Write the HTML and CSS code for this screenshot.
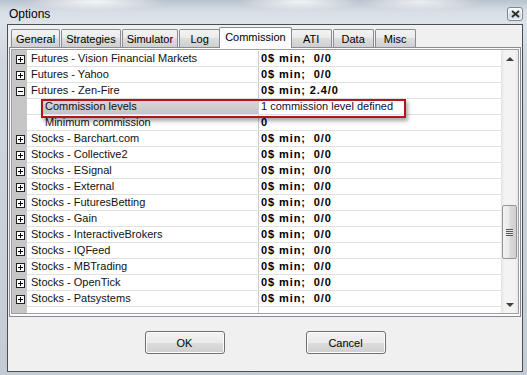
FILE: index.html
```html
<!DOCTYPE html>
<html lang="en">
<head>
    <meta charset="UTF-8">
    <title>Options</title>
    <link rel="stylesheet" href="styles.css">
</head>
<body>
    <div class="window">
        <div class="titlebar">
            <span class="title">Options</span>
            <button class="close-btn" title="Close">
                <svg width="9" height="8" viewBox="0 0 9 8">
                    <path d="M1 1 L8 7 M8 1 L1 7" stroke="#2b2b2b" stroke-width="1.8" fill="none"/>
                </svg>
            </button>
        </div>

        <div class="client">
            <div class="tab-links">
                <div class="tab">General</div>
                <div class="tab">Strategies</div>
                <div class="tab">Simulator</div>
                <div class="tab">Log</div>
                <div class="tab active">Commission</div>
                <div class="tab">ATI</div>
                <div class="tab">Data</div>
                <div class="tab">Misc</div>
            </div>

            <div class="tab-page">
                <div class="grid">
                    <div class="rows">
                        <div class="row"><span class="gutter"><span class="expander plus"></span></span><span class="name">Futures - Vision Financial Markets</span><span class="value bold">0$ min;  0/0</span></div>
                        <div class="row"><span class="gutter"><span class="expander plus"></span></span><span class="name">Futures - Yahoo</span><span class="value bold">0$ min;  0/0</span></div>
                        <div class="row"><span class="gutter"><span class="expander"></span></span><span class="name">Futures - Zen-Fire</span><span class="value bold">0$ min; 2.4/0</span></div>
                        <div class="row child selected"><span class="gutter"></span><span class="name"><span class="label">Commission levels</span></span><span class="value">1 commission level defined</span></div>
                        <div class="row child"><span class="gutter"></span><span class="name"><span class="label">Minimum commission</span></span><span class="value bold">0</span></div>
                        <div class="row"><span class="gutter"><span class="expander plus"></span></span><span class="name">Stocks - Barchart.com</span><span class="value bold">0$ min;  0/0</span></div>
                        <div class="row"><span class="gutter"><span class="expander plus"></span></span><span class="name">Stocks - Collective2</span><span class="value bold">0$ min;  0/0</span></div>
                        <div class="row"><span class="gutter"><span class="expander plus"></span></span><span class="name">Stocks - ESignal</span><span class="value bold">0$ min;  0/0</span></div>
                        <div class="row"><span class="gutter"><span class="expander plus"></span></span><span class="name">Stocks - External</span><span class="value bold">0$ min;  0/0</span></div>
                        <div class="row"><span class="gutter"><span class="expander plus"></span></span><span class="name">Stocks - FuturesBetting</span><span class="value bold">0$ min;  0/0</span></div>
                        <div class="row"><span class="gutter"><span class="expander plus"></span></span><span class="name">Stocks - Gain</span><span class="value bold">0$ min;  0/0</span></div>
                        <div class="row"><span class="gutter"><span class="expander plus"></span></span><span class="name">Stocks - InteractiveBrokers</span><span class="value bold">0$ min;  0/0</span></div>
                        <div class="row"><span class="gutter"><span class="expander plus"></span></span><span class="name">Stocks - IQFeed</span><span class="value bold">0$ min;  0/0</span></div>
                        <div class="row"><span class="gutter"><span class="expander plus"></span></span><span class="name">Stocks - MBTrading</span><span class="value bold">0$ min;  0/0</span></div>
                        <div class="row"><span class="gutter"><span class="expander plus"></span></span><span class="name">Stocks - OpenTick</span><span class="value bold">0$ min;  0/0</span></div>
                        <div class="row"><span class="gutter"><span class="expander plus"></span></span><span class="name">Stocks - Patsystems</span><span class="value bold">0$ min;  0/0</span></div>
                        <div class="row"><span class="gutter"></span><span class="name"></span><span class="value"></span></div>

                        <!-- red annotation box over the selected row -->
                        <div class="annotation"></div>
                    </div>

                    <div class="scrollbar">
                        <div class="scroll-btn"><span class="arrow up"></span></div>
                        <div class="scroll-track">
                            <div class="scroll-thumb"><span class="grip"></span></div>
                        </div>
                        <div class="scroll-btn"><span class="arrow down"></span></div>
                    </div>
                </div>
            </div>

            <div class="dialog-buttons">
                <button class="dlg-btn">OK</button>
                <button class="dlg-btn">Cancel</button>
            </div>
        </div>
    </div>
</body>
</html>
```

FILE: styles.css
```css
/* Page and window frame */
body {
    margin: 0;
    font-family: "Liberation Sans", Arial, sans-serif;
    font-size: 11px;
    color: #000;
    background: #c8d1db;
}

.window {
    width: 527px;
    height: 375px;
    box-sizing: border-box;
    display: flex;
    flex-direction: column;
    padding: 0 4px 3px 7px;
    overflow: hidden;
    background:
        radial-gradient(ellipse 70px 9px at 95px 2px, rgba(255,255,255,0.85), rgba(255,255,255,0) 100%),
        radial-gradient(ellipse 60px 9px at 300px 2px, rgba(255,255,255,0.8), rgba(255,255,255,0) 100%),
        radial-gradient(ellipse 60px 9px at 420px 2px, rgba(255,255,255,0.7), rgba(255,255,255,0) 100%),
        linear-gradient(#b9c3ce 0, #d9dfe6 12px, #dde3ea 24px, #cfd6de 60px, #c3ccd5 100%);
}

/* Title bar */
.titlebar {
    height: 24px;
    display: flex;
    align-items: flex-start;
    margin-left: -7px;
    margin-right: -4px;
    padding-left: 9px;
    padding-right: 4px;
}
.title {
    font-size: 12px;
    line-height: 12px;
    margin-top: 8px;
    color: #000;
}
.close-btn {
    margin-left: auto;
    margin-top: 7px;
    width: 16px;
    height: 14px;
    padding: 0;
    display: flex;
    align-items: center;
    justify-content: center;
    border: 1px solid #7d8792;
    border-radius: 3px;
    background: linear-gradient(#f7f9fb, #dfe4ea 50%, #cdd4dc 51%, #e3e8ee);
    box-shadow: inset 0 0 0 1px rgba(255,255,255,0.6);
}

/* Client area of the dialog */
.client {
    flex: 1;
    display: flex;
    flex-direction: column;
    border: 1px solid #4a4f55;
    background: #f0f0f0;
}

/* Tabs */
.tab-links {
    height: 22px;
    display: flex;
    align-items: flex-end;
    padding-left: 3px;
}
.tab {
    height: 18px;
    min-width: 41px;
    box-sizing: border-box;
    padding: 0 4px;
    margin-right: 1px;
    display: flex;
    align-items: center;
    justify-content: center;
    border: 1px solid #898c95;
    border-bottom: none;
    border-radius: 2px 2px 0 0;
    background: linear-gradient(#f3f3f3, #ebebeb 45%, #dddddd 50%, #cfcfcf);
    font-size: 11px;
}
.tab.active {
    height: 21px;
    margin: 0 -1px -1px -2px;
    padding: 0 5px;
    position: relative;
    z-index: 1;
    background: #fcfcfe;
    padding-bottom: 2px;
}
.tab.active + .tab {
    margin-left: 0;
}

/* Tab page with the property grid */
.tab-page {
    height: 270px;
    box-sizing: border-box;
    margin: 0 1px;
    padding: 1px;
    border: 1px solid #898c95;
    background: #fcfcfc;
}
.grid {
    height: 265px;
    box-sizing: border-box;
    display: flex;
    border: 1px solid #a0a0a0;
    background: #fff;
    overflow: hidden;
}
.rows {
    flex: 1;
    position: relative;
    padding-top: 1px;
    overflow: hidden;
    background: linear-gradient(to right, #c6c6c6 15px, #fff 15px);
}
.row {
    display: flex;
    height: 16px;
    line-height: 15px;
}
.gutter {
    width: 15px;
    flex: none;
    display: flex;
    align-items: center;
    padding-left: 4px;
    box-sizing: border-box;
    background: #c6c6c6;
}
.name {
    width: 232px;
    flex: none;
    box-sizing: border-box;
    padding-left: 4px;
    border-right: 1px solid #cdcdcd;
    border-bottom: 1px solid #e1e1e1;
    color: #111;
    white-space: nowrap;
    overflow: hidden;
}
.value {
    flex: 1;
    padding-left: 2px;
    border-bottom: 1px solid #e1e1e1;
    white-space: pre;
    overflow: hidden;
    color: #101030;
}
.value.bold {
    font-weight: bold;
    letter-spacing: 0.9px;
    color: #000;
}

/* Nested rows */
.row.child .name {
    display: flex;
    padding-left: 15px;
}
.row.child .label {
    flex: 1;
    padding-left: 3px;
}
.row.selected .label {
    background: linear-gradient(#dadada, #c4c4c4);
}

/* Expand / collapse boxes */
.expander {
    width: 9px;
    height: 9px;
    box-sizing: border-box;
    border: 1px solid #222;
    background: #fff;
    position: relative;
}
.expander::before {
    content: "";
    position: absolute;
    left: 1px;
    top: 3px;
    width: 5px;
    height: 1px;
    background: #000;
}
.expander.plus::after {
    content: "";
    position: absolute;
    left: 3px;
    top: 1px;
    width: 1px;
    height: 5px;
    background: #000;
}

/* Red annotation rectangle */
.annotation {
    position: absolute;
    left: 29px;
    top: 49px;
    width: 365px;
    height: 19px;
    box-sizing: border-box;
    border: 2px solid #b3141d;
    box-shadow: 2px 3px 4px rgba(0, 0, 0, 0.35);
}

/* Scrollbar */
.scrollbar {
    width: 17px;
    flex: none;
    display: flex;
    flex-direction: column;
    background: linear-gradient(to right, #e3e3e3, #f3f3f3 20%, #f3f3f3 80%, #e6e6e6);
}
.scroll-btn {
    height: 17px;
    display: flex;
    align-items: center;
    justify-content: center;
}
.arrow {
    width: 0;
    height: 0;
    border-left: 4px solid transparent;
    border-right: 4px solid transparent;
}
.arrow.up {
    border-bottom: 4px solid #3f3f3f;
}
.arrow.down {
    border-top: 4px solid #3f3f3f;
}
.scroll-track {
    flex: 1;
    padding-top: 138px;
}
.scroll-thumb {
    height: 54px;
    margin: 0 1px;
    box-sizing: border-box;
    border: 1px solid #979797;
    border-radius: 2px;
    background: linear-gradient(to right, #f2f2f2, #e9e9e9 45%, #d8d8d8 55%, #d0d0d0);
    display: flex;
    align-items: center;
    justify-content: center;
}
.grip {
    width: 7px;
    height: 7px;
    background: repeating-linear-gradient(#555 0 1px, #e8e8e8 1px 2px);
}

/* OK / Cancel */
.dialog-buttons {
    display: flex;
    justify-content: center;
    gap: 81px;
    margin-top: 14px;
}
.dlg-btn {
    width: 80px;
    height: 23px;
    padding: 0;
    border: 1px solid #707070;
    border-radius: 3px;
    background: linear-gradient(#f2f2f2, #ebebeb 50%, #dddddd 51%, #cfcfcf);
    box-shadow: inset 0 0 0 1px #fcfcfc;
    font-family: "Liberation Sans", Arial, sans-serif;
    font-size: 11px;
    color: #000;
}
```
